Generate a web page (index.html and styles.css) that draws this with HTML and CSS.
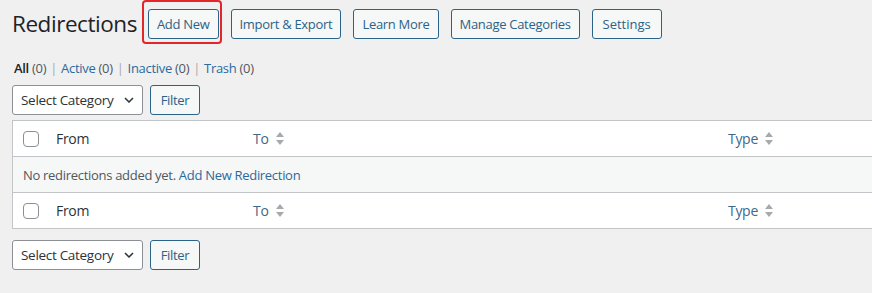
FILE: index.html
```html
<!DOCTYPE html>
<html lang="en">
<head>
    <meta charset="UTF-8">
    <title>Redirections</title>
    <link rel="stylesheet" href="styles.css">
</head>
<body>
    <div class="wrap">
        <!-- TITLE + ACTIONS -->
        <div class="title-row">
            <h1 class="page-title">Redirections</h1>
            <a href="#" class="page-title-action is-marked">Add New</a>
            <a href="#" class="page-title-action">Import &amp; Export</a>
            <a href="#" class="page-title-action">Learn More</a>
            <a href="#" class="page-title-action">Manage Categories</a>
            <a href="#" class="page-title-action">Settings</a>
        </div>

        <!-- STATUS LINKS -->
        <ul class="subsubsub">
            <li><a href="#" class="current">All <span class="count">(0)</span></a><span class="sep">|</span></li>
            <li><a href="#">Active <span class="count">(0)</span></a><span class="sep">|</span></li>
            <li><a href="#">Inactive <span class="count">(0)</span></a><span class="sep">|</span></li>
            <li><a href="#">Trash <span class="count">(0)</span></a></li>
        </ul>

        <div class="tablenav">
            <div class="select-box">
                Select Category
                <svg class="chevron" width="10" height="6" viewBox="0 0 10 6"><path d="M1 1l4 4 4-4" fill="none" stroke="#2c3338" stroke-width="1.5"/></svg>
            </div>
            <button class="button">Filter</button>
        </div>

        <!-- LIST TABLE -->
        <table class="list-table">
            <thead>
                <tr>
                    <th class="check-column"><span class="checkbox"></span></th>
                    <th class="col-from">From</th>
                    <th class="col-to"><a href="#">To <svg class="sort" width="10" height="13" viewBox="0 0 10 13"><path d="M5 0l4 5H1z M5 13l4-5H1z" fill="#a7aaad"/></svg></a></th>
                    <th class="col-type"><a href="#">Type <svg class="sort" width="10" height="13" viewBox="0 0 10 13"><path d="M5 0l4 5H1z M5 13l4-5H1z" fill="#a7aaad"/></svg></a></th>
                </tr>
            </thead>
            <tbody>
                <tr class="no-items">
                    <td colspan="4">No redirections added yet. <a href="#">Add New Redirection</a></td>
                </tr>
            </tbody>
            <tfoot>
                <tr>
                    <th class="check-column"><span class="checkbox"></span></th>
                    <th>From</th>
                    <th><a href="#">To <svg class="sort" width="10" height="13" viewBox="0 0 10 13"><path d="M5 0l4 5H1z M5 13l4-5H1z" fill="#a7aaad"/></svg></a></th>
                    <th><a href="#">Type <svg class="sort" width="10" height="13" viewBox="0 0 10 13"><path d="M5 0l4 5H1z M5 13l4-5H1z" fill="#a7aaad"/></svg></a></th>
                </tr>
            </tfoot>
        </table>

        <div class="tablenav bottom">
            <div class="select-box">
                Select Category
                <svg class="chevron" width="10" height="6" viewBox="0 0 10 6"><path d="M1 1l4 4 4-4" fill="none" stroke="#2c3338" stroke-width="1.5"/></svg>
            </div>
            <button class="button">Filter</button>
        </div>
    </div>
</body>
</html>
```

FILE: styles.css
```css
:root {
    --link-color: #2a6a9c;
    --button-color: #2b6388;
    --border-color: #c3c4c7;
    --text-color: #2c3338;
}

body {
    margin: 0;
    background: #f0f0f1;
    color: var(--text-color);
    font-family: "Open Sans", "Noto Sans", sans-serif;
    font-size: 13px;
    letter-spacing: -0.3px;
    overflow: hidden;
}

a {
    color: var(--link-color);
    text-decoration: none;
}

.wrap {
    padding: 0 0 0 12px;
    width: 1000px;
}

/* TITLE ROW */
.title-row {
    display: flex;
    align-items: center;
    height: 47px;
}

.page-title {
    margin: 0 11px 0 0;
    font-size: 22.5px;
    font-weight: 400;
    color: #1d2327;
    letter-spacing: -0.45px;
}

.page-title-action {
    position: relative;
    display: inline-block;
    height: 28px;
    line-height: 28px;
    padding: 0 8px;
    margin-right: 12px;
    border: 1px solid var(--button-color);
    border-radius: 3px;
    background: #f6f7f7;
    color: var(--button-color);
    font-size: 13px;
}

.page-title-action:last-child {
    padding: 0 10px;
    letter-spacing: 0;
}

/* red annotation box */
.page-title-action.is-marked::after {
    content: "";
    position: absolute;
    top: -10px;
    left: -7px;
    right: -4px;
    bottom: -6px;
    border: 2.5px solid #e3262a;
    border-radius: 4px;
}

/* STATUS LINKS */
.subsubsub {
    list-style: none;
    margin: 13px 0 0 2px;
    padding: 0;
    display: flex;
    color: #a7aaad;
    height: 17px;
    line-height: 17px;
}

.subsubsub .sep {
    margin: 0 4px;
}

.subsubsub a .count {
    color: #50575e;
}

.subsubsub a.current {
    color: #1d2327;
    font-weight: 600;
}

.subsubsub a.current .count {
    font-weight: 400;
}

/* TABLENAV */
.tablenav {
    display: flex;
    gap: 7px;
    margin: 8px 0 5px;
    height: 30px;
}

.tablenav.bottom {
    margin: 11px 0 0;
}

.select-box {
    box-sizing: border-box;
    width: 131px;
    height: 30px;
    padding: 0 8px;
    display: flex;
    align-items: center;
    justify-content: space-between;
    background: #fff;
    border: 1px solid #8c8f94;
    border-radius: 3px;
    font-size: 13.5px;
    color: var(--text-color);
}

.button {
    box-sizing: border-box;
    height: 30px;
    width: 50px;
    padding: 0;
    border: 1px solid var(--button-color);
    border-radius: 3px;
    background: #f6f7f7;
    color: var(--button-color);
    font-family: inherit;
    font-size: 13px;
    letter-spacing: inherit;
}

/* LIST TABLE */
.list-table {
    width: 1000px;
    table-layout: fixed;
    border-collapse: collapse;
    background: #fff;
    border: 1px solid var(--border-color);
}

.list-table th {
    text-align: left;
    font-weight: 400;
    font-size: 14px;
    height: 35px;
    padding: 0 10px;
    color: var(--text-color);
}

.list-table thead tr {
    border-bottom: 1px solid var(--border-color);
}

.list-table tfoot tr {
    border-top: 1px solid var(--border-color);
}

.list-table th a {
    display: inline-flex;
    align-items: center;
    gap: 6px;
    color: #3f6788;
}

.check-column {
    width: 13px;
}

.col-from {
    width: 177px;
}

.col-to {
    width: 455px;
}

.checkbox {
    display: block;
    width: 14px;
    height: 14px;
    border: 1px solid #8c8f94;
    border-radius: 4px;
    background: #fff;
}

.no-items td {
    background: #f6f7f7;
    height: 35px;
    padding: 0 10px;
    font-size: 13px;
    color: #50575e;
}
```
